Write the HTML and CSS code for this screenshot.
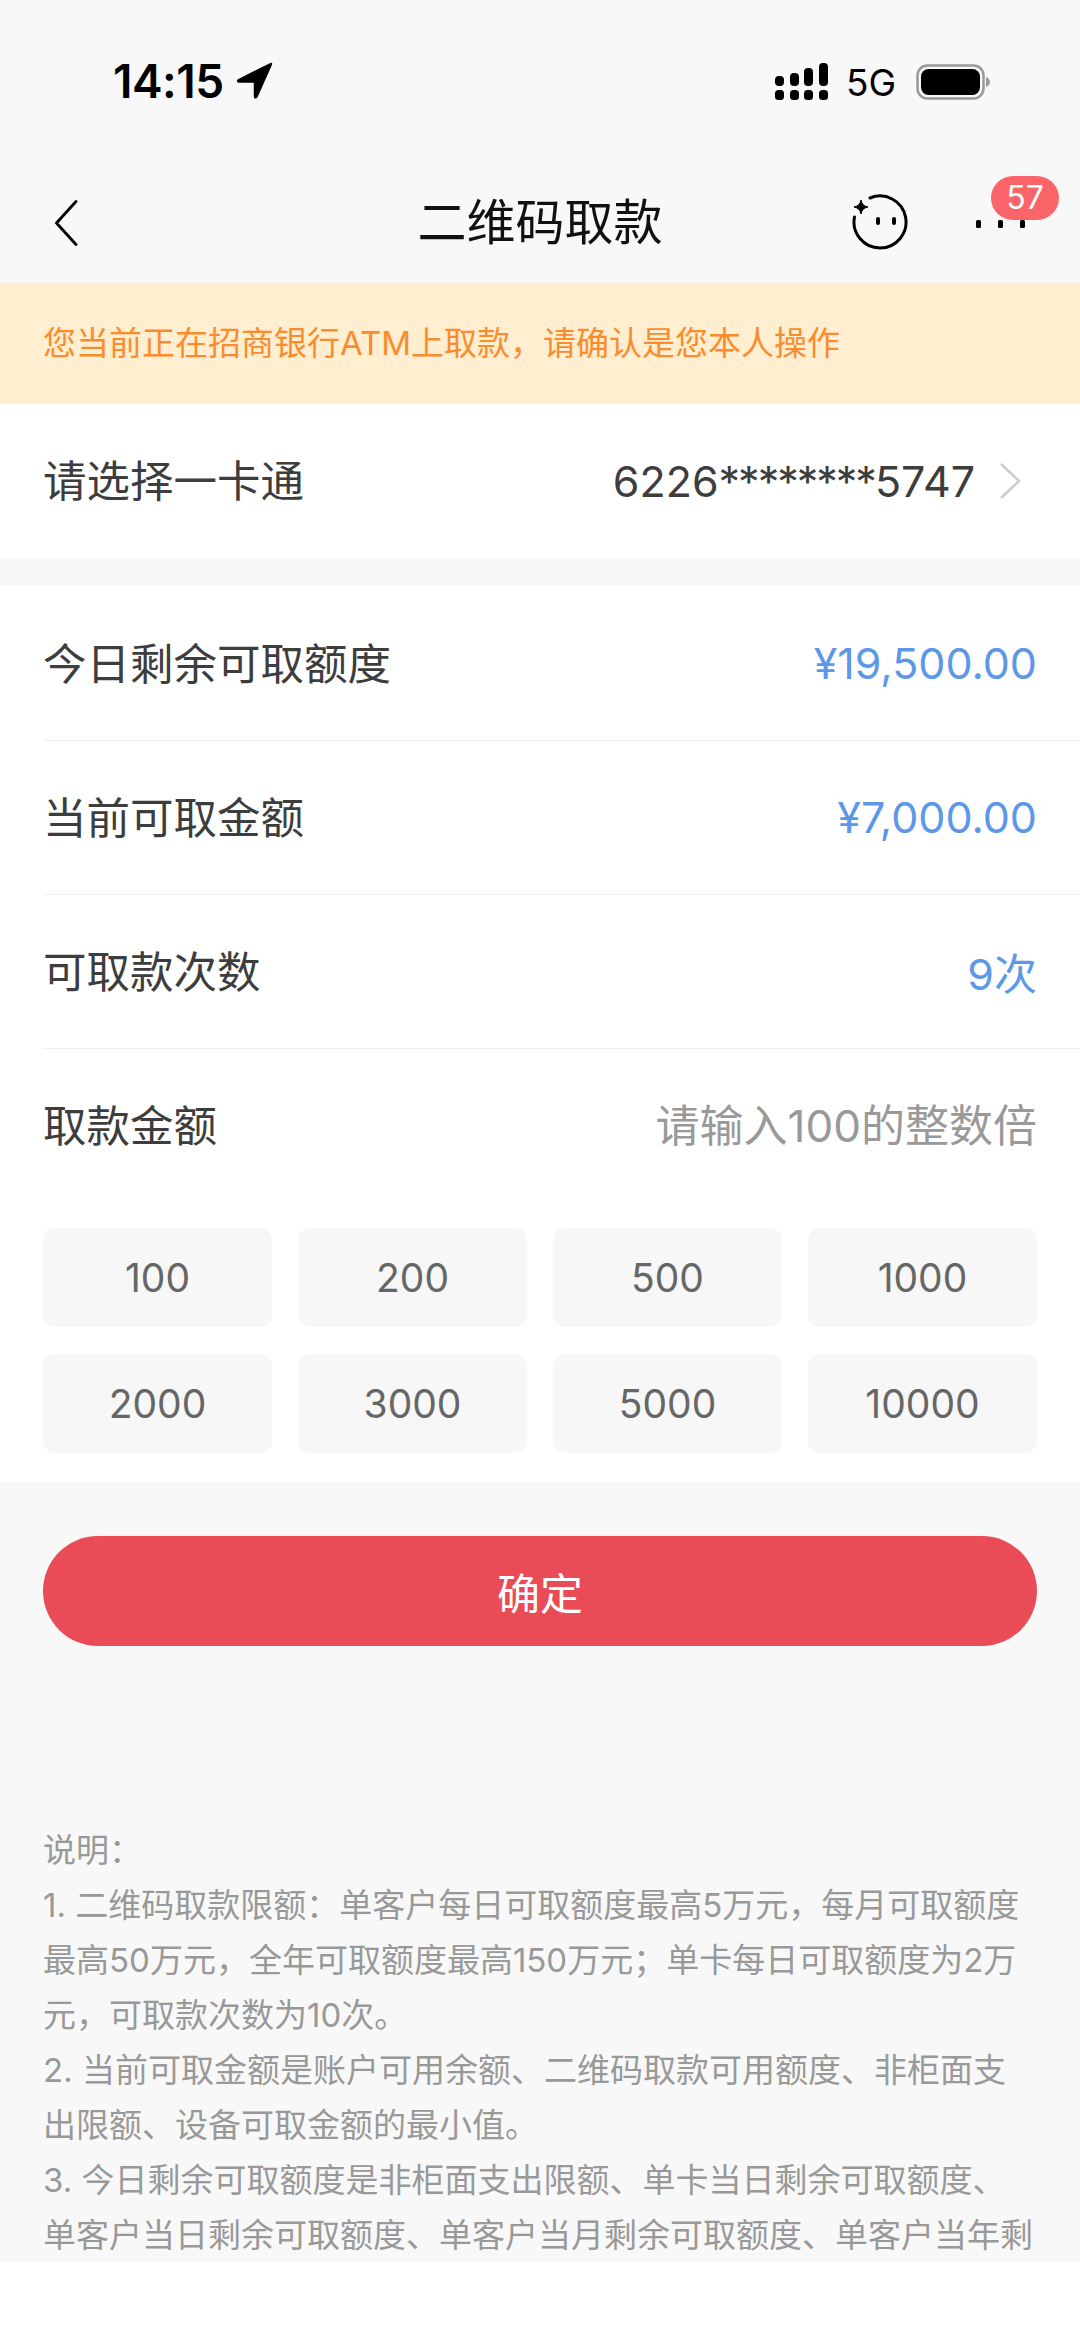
FILE: index.html
```html
<!DOCTYPE html>
<html lang="zh-CN">
<head>
  <meta charset="UTF-8" />
  <meta name="viewport" content="width=device-width,initial-scale=1.0" />
  <title>二维码取款</title>
  <link rel="stylesheet" href="styles.css">
</head>
<body>
  <div class="page">
    <!-- status bar -->
    <div class="status">
      <div class="status-left">
        <span class="time">14:15</span>
        <svg class="loc" width="38" height="38" viewBox="0 0 38 38"><path d="M35 2 L3 18 Q1 19.500 3.500 19.500 L19 19.500 L19 34 Q19 36.500 20.500 34.500 Z" fill="#000" stroke="#000" stroke-width="2.500" stroke-linejoin="round"/></svg>
      </div>
      <div class="status-right">
        <svg width="53" height="37" viewBox="0 0 53 37" fill="#000">
          <rect x="0" y="13" width="9" height="10" rx="4"/>
          <rect x="15" y="10" width="9" height="13" rx="4"/>
          <rect x="29" y="5" width="9" height="18" rx="4"/>
          <rect x="44" y="0" width="9" height="23" rx="4"/>
          <rect x="0" y="27" width="9" height="10" rx="3.500"/>
          <rect x="15" y="27" width="9" height="10" rx="3.500"/>
          <rect x="29" y="27" width="9" height="10" rx="3.500"/>
          <rect x="44" y="27" width="9" height="10" rx="3.500"/>
        </svg>
        <span class="net">5G</span>
        <svg width="74" height="36" viewBox="0 0 74 36">
          <rect x="1.500" y="1.500" width="66" height="33" rx="10" fill="none" stroke="#999" stroke-width="2.500"/>
          <rect x="5" y="5" width="59" height="26" rx="7.500" fill="#000"/>
          <path d="M70 13 Q74 15 74 18 Q74 21 70 23 Z" fill="#999"/>
        </svg>
      </div>
    </div>

    <!-- nav -->
    <div class="nav">
      <div class="nav-left">
        <svg width="24" height="46" viewBox="0 0 24 46"><path d="M22 1.500 L2.500 23 L22 44.500" fill="none" stroke="#000" stroke-width="2.800" stroke-linecap="round" stroke-linejoin="round"/></svg>
      </div>
      <div class="nav-title">二维码取款</div>
      <div class="nav-right">
        <svg width="60" height="60" viewBox="0 0 60 60">
          <path d="M20 5 A26 26 0 1 1 4.500 24" fill="none" stroke="#000" stroke-width="3" stroke-linecap="round"/>
          <path d="M11 7 Q12 13 18 14 Q12 15 11 21 Q10 15 4 14 Q10 13 11 7 Z" fill="#000" stroke="#000" stroke-width="1"/>
          <rect x="26" y="24" width="4" height="8" rx="2" fill="#000"/>
          <rect x="42" y="24" width="4" height="8" rx="2" fill="#000"/>
        </svg>
        <div class="more">
          <i></i><i></i><i></i>
          <span class="badge">57</span>
        </div>
      </div>
    </div>

    <div class="notice">您当前正在招商银行ATM上取款&#xFF0C;请确认是您本人操作</div>

    <div class="card-row">
      <span class="label">请选择一卡通</span>
      <span class="card-no">
        <span>6226<span class="mask">********</span>5747</span>
        <svg width="22" height="38" viewBox="0 0 22 38"><path d="M2 2 L20 19 L2 36" fill="none" stroke="#cccccc" stroke-width="2.500"/></svg>
      </span>
    </div>

    <div class="panel">
      <div class="row"><span class="label">今日剩余可取额度</span><span class="val">¥19,500.00</span></div>
      <div class="row"><span class="label">当前可取金额</span><span class="val">¥7,000.00</span></div>
      <div class="row"><span class="label">可取款次数</span><span class="val">9次</span></div>
      <div class="row row-input">
        <span class="label">取款金额</span>
        <input class="amount" type="text" placeholder="请输入100的整数倍" />
      </div>
      <div class="chips">
        <div class="chip">100</div>
        <div class="chip">200</div>
        <div class="chip">500</div>
        <div class="chip">1000</div>
        <div class="chip">2000</div>
        <div class="chip">3000</div>
        <div class="chip">5000</div>
        <div class="chip">10000</div>
      </div>
    </div>

    <button class="submit" type="button">确定</button>

    <div class="notes">
      <p>说明&#xFF1A;</p>
      <p>1. 二维码取款限额&#xFF1A;单客户每日可取额度最高5万元&#xFF0C;每月可取额度最高50万元&#xFF0C;全年可取额度最高150万元&#xFF1B;单卡每日可取额度为2万元&#xFF0C;可取款次数为10次。</p>
      <p>2. 当前可取金额是账户可用余额、二维码取款可用额度、非柜面支出限额、设备可取金额的最小值。</p>
      <p>3. 今日剩余可取额度是非柜面支出限额、单卡当日剩余可取额度、单客户当日剩余可取额度、单客户当月剩余可取额度、单客户当年剩余</p>
    </div>
  </div>
</body>
</html>
```

FILE: styles.css
```css
*{box-sizing:border-box;}
html,body{margin:0;padding:0;background:#fff;}
body{font-family:Inter,"Noto Sans CJK SC",sans-serif;color:#3d3d3d;}
.page{width:1080px;height:2263px;overflow:hidden;background:#f8f8f8;}

.status{
  height:160px;padding:62px 90px 0 113px;
  display:flex;justify-content:space-between;align-items:flex-start;
}
.status-left{display:flex;align-items:center;gap:12px;}
.time{font-size:46px;font-weight:600;line-height:38px;color:#000;letter-spacing:-.5px;}
.status-right{display:flex;align-items:center;gap:18px;}
.net{font-size:37px;line-height:37px;color:#000;margin:2px 2px 0 0;}

.nav{
  height:123px;padding:3px 21px 0;
  display:grid;grid-template-columns:minmax(0,1fr) auto minmax(0,1fr);align-items:center;
}
.nav-left{display:flex;align-items:center;padding-left:33px;}
.nav-title{font-size:49px;line-height:60px;color:#111;}
.nav-right{display:flex;justify-content:flex-end;align-items:center;gap:66px;padding-right:34px;}
.more{position:relative;display:flex;gap:17px;width:49px;height:8px;margin-top:2px;}
.more i{display:block;width:5px;height:8px;background:#000;border-radius:1.500px;}
.badge{
  position:absolute;left:15px;top:-44px;width:68px;height:44px;border-radius:22px;
  background:#fb6469;color:#fff;font-size:32px;line-height:44px;text-align:center;
}

.notice{
  height:121px;background:#ffeed0;color:#fa8c2e;
  padding:0 43px;font-size:33px;line-height:120px;
}

.card-row,.row{display:flex;justify-content:space-between;align-items:center;}
.card-row{height:154px;background:#fff;padding:0 59px 0 43px;}
.label{font-size:43.500px;line-height:60px;}
.card-no{display:flex;align-items:center;gap:24px;font-size:43px;}
.mask{letter-spacing:-2px;}

.panel{margin-top:27px;background:#fff;height:897px;padding:2px 0 0 43px;}
.row{height:154px;padding-right:43px;border-bottom:1px solid #eee;}
.val{font-size:43px;color:#5c97e8;margin-top:-2px;}
.row-input{border-bottom:none;}
.amount{
  width:500px;border:none;outline:none;background:none;padding:0;text-align:right;
  font-family:inherit;font-size:44px;color:#3d3d3d;
}
.amount::placeholder{color:#999;opacity:1;}

.chips{
  display:grid;grid-template-columns:repeat(4,1fr);gap:27px 26px;
  padding-right:43px;margin-top:25px;
}
.chip{
  height:99px;background:#f7f7f7;border-radius:12px;color:#666;
  font-size:39px;line-height:99px;text-align:center;
}

.submit{
  display:block;width:994px;height:110px;margin:54px 43px 0;border:none;border-radius:55px;
  background:#e94b57;color:#fff;font-family:inherit;font-size:43px;
}

.notes{padding:177px 43px 0;}
.notes p{margin:0;font-size:33px;line-height:55px;color:#999;}
```
